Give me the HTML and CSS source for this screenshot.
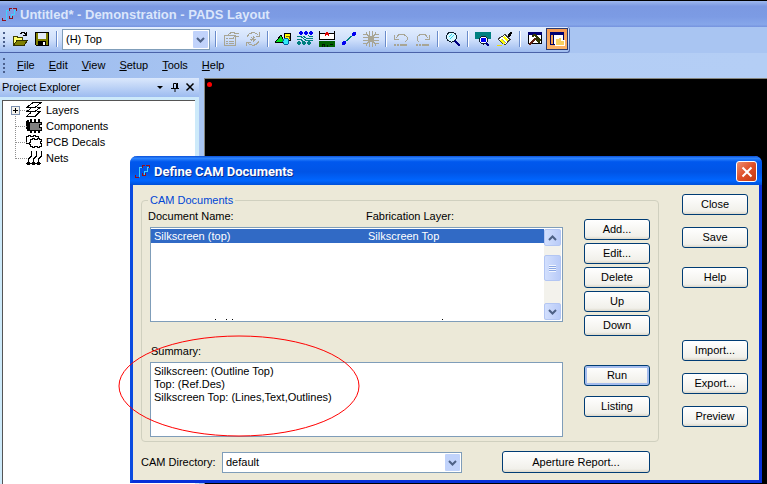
FILE: index.html
```html
<!DOCTYPE html>
<html lang="en">
<head>
  <meta charset="UTF-8">
  <meta name="viewport" content="width=device-width, initial-scale=1.0">
  <title>Untitled* - Demonstration - PADS Layout</title>
  <link rel="stylesheet" href="styles.css">
</head>
<body>
  <div class="app">
    <header class="app-title">
      <svg class="logo" viewBox="0 0 16 16"><path d="M4.500 13V3.500H7M9.500 11V7.500H12.500V3.500H14" fill="none" stroke="#40d0ff"/><path d="M.500 11V13.500H4M7.500 4V1.500H10M11 1.500H14.500V4M7.500 9V11.500H10.500V9" fill="none" stroke="#90101c"/></svg>
      <h1>Untitled* - Demonstration - PADS Layout</h1>
    </header>

    <div class="toolbar">
      <span class="grip"></span>
      <button class="tool" aria-label="Open"><svg viewBox="0 0 16 16"><path d="M1.500 14V5.500H5L6 6.500H10.500V9" fill="#ffff70" stroke="#404000"/><path d="M1.500 14.500L5 9.500H15.500L12 14.500Z" fill="#808000" stroke="#303000"/><path d="M8.500 3L10 1.500H12L14 3.500M14.500 1V4.500H11" fill="none" stroke="#000"/></svg></button>
      <button class="tool" aria-label="Save"><svg viewBox="0 0 16 16"><path d="M1.500 1.500H14.500V14.500H2.500L1.500 13.500Z" fill="#808000" stroke="#000"/><path d="M4 2H12V8H4Z" fill="#e4ecf8"/><path d="M4 10H12V14H4Z" fill="#000"/><path d="M9 11H11V14H9Z" fill="#fff"/></svg></button>
      <span class="sep"></span>
      <select class="combo layer" aria-label="Layer"><option>(H) Top</option></select>
      <span class="sep"></span>
      <button class="tool" aria-label="Properties"><svg viewBox="0 0 16 16"><path d="M1.500 4.500H12.500V14.500H1.500ZM3 7.500H5M6 7.500H11M3 10H5M6 10H11M3 12.500H5M6 12.500H11M5 4L8 1.500H11L12 2.500H16V5H12L10 7" fill="none" stroke="#a8a594"/></svg></button>
      <button class="tool" aria-label="Cycle"><svg viewBox="0 0 16 16"><path d="M2 6A6.500 6.500 0 0 1 13 4M14 10A6.500 6.500 0 0 1 3 12M14.500 1V5H10.500M1.500 15V11H5.500" fill="none" stroke="#a8a594"/><path d="M8 5V11M5 8H11M6 6L10 10M10 6L6 10" stroke="#a8a594"/></svg></button>
      <span class="sep"></span>
      <button class="tool" aria-label="Drafting"><svg viewBox="0 0 16 16"><path d="M9 2.500H15.500V9.500H9Z" fill="#ffff00" stroke="#000"/><path d="M11 5H14V8" fill="none" stroke="#806000"/><path d="M0 11.500L6 4L10 11.500Z" fill="#00e020" stroke="#000"/><circle cx="11" cy="10.500" r="3" fill="#30e8f8" stroke="#0060a0"/></svg></button>
      <button class="tool" aria-label="Design"><svg viewBox="0 0 16 16"><path d="M3 0H5V1H6V3H5V4H3V3H2V1H3ZM8 0H10V1H11V3H10V4H8V3H7V1H8ZM13 0H15V1H16V3H15V4H13V3H12V1H13Z" fill="#0000f0"/><path d="M0 5.500H4L9 9.500H16M6 5L10 7.500H16M11 4.500L13 5.500H16M0 8.500H4L6 10.500" fill="none" stroke="#008080"/><path d="M1 10H3V11H4V13H3V14H1V13H0V11H1ZM6 10H8V11H9V13H8V14H6V13H5V11H6ZM11 10H13V11H14V13H13V14H11V13H10V11H11Z" fill="#008080"/></svg></button>
      <button class="tool" aria-label="Dimensioning"><svg viewBox="0 0 16 16"><path d="M1 3H15V9H1Z" fill="#fff"/><path d="M.500 0V9M15.500 0V9M0 2.500H16M0 8.500H16" stroke="#000"/><path d="M7 1H9V2H10V5H9V4H7V5H6V2H7Z" fill="#e00000"/><path d="M0 10H16V16H0Z" fill="#006000"/><path d="M3.500 16V13.500H5.500V16M8.500 16V13.500M11 13.500H14" fill="none" stroke="#001800"/></svg></button>
      <button class="tool" aria-label="ECO"><svg viewBox="0 0 16 16"><path d="M3 12L13 3" stroke="#008080"/><circle cx="3" cy="12" r="2" fill="#0000f0"/><circle cx="13" cy="3" r="2" fill="#0000f0"/></svg></button>
      <button class="tool" aria-label="BGA"><svg viewBox="0 0 16 16"><path d="M6 5H10V6H11V10H10V11H6V10H5V6H6Z" fill="#a8a594"/><path d="M6.500 0V5M9.500 0V5M6.500 11V16M9.500 11V16M0 6.500H5M0 9.500H5M11 6.500H16M11 9.500H16M3.500 1V3L6 5.500M12.500 1V3L10 5.500M3.500 15V13L6 10.500M12.500 15V13L10 10.500M0 3.500H3M13 3.500H16M0 12.500H3M13 12.500H16" fill="none" stroke="#a8a594"/></svg></button>
      <span class="sep"></span>
      <button class="tool" aria-label="Undo"><svg viewBox="0 0 16 16"><path d="M3 7L6 3.500H11L14 6V9L12 11M1.500 4V8.500H6" fill="none" stroke="#a8a594"/><path d="M1 14H3M4 14H6M7 14H14" stroke="#a8a594" stroke-width="2"/></svg></button>
      <button class="tool" aria-label="Redo"><svg viewBox="0 0 16 16"><path d="M13 7L10 3.500H5L2 6V9L4 11M14.500 4V8.500H10" fill="none" stroke="#a8a594"/><path d="M1 14H3M4 14H6M7 14H14" stroke="#a8a594" stroke-width="2"/></svg></button>
      <span class="sep"></span>
      <button class="tool" aria-label="Zoom"><svg viewBox="0 0 16 16"><circle cx="6.500" cy="6" r="5" fill="#d8f8ff" stroke="#102030"/><path d="M4 6L7 3M5 8L9 4" stroke="#30d8f0"/><path d="M10 10L15 15" stroke="#000080" stroke-width="2"/></svg></button>
      <span class="sep"></span>
      <button class="tool" aria-label="View board"><svg viewBox="0 0 16 16"><path d="M0 1H16V8H13L12 6H6L4 8H0Z" fill="#008080"/><circle cx="8.500" cy="9" r="4" fill="#fff" stroke="#102030"/><circle cx="8.500" cy="9" r="2.500" fill="#0000f0"/><path d="M11 12L14 15" stroke="#000080" stroke-width="2"/></svg></button>
      <button class="tool" aria-label="Redraw"><svg viewBox="0 0 16 16"><path d="M11 5L14 1L15 2L12 6Z" fill="#000" stroke="#000"/><path d="M1 8L8 3.500L13 8.500L8 14Z" fill="#fff" stroke="#404040"/><path d="M5 8L9 12" stroke="#a0a0a0"/><path d="M4 9L8 13M7 6L11 10" stroke="#ffff00" stroke-width="2"/><path d="M0 14.500H5" stroke="#f0e000"/></svg></button>
      <span class="sep"></span>
      <button class="tool" aria-label="Output window"><svg viewBox="0 0 16 16"><path d="M1.500 1.500H14.500V12.500H1.500Z" fill="#fff" stroke="#000"/><path d="M1 1H15V4H1Z" fill="#000070"/><path d="M5 5L8 4L13 9L12 11L9 8L8 9" fill="none" stroke="#303800" stroke-width="2"/><path d="M8 8L2 14" stroke="#602010" stroke-width="2"/></svg></button>
      <button class="tool active" aria-label="Project explorer"><svg viewBox="0 0 16 16"><path d="M1.500 1.500H14.500V13.500H1.500Z" fill="#fff" stroke="#000060"/><path d="M1 1H15V4H1Z" fill="#000070"/><path d="M2 4H4V13H2Z" fill="#f4a04c"/><path d="M4.500 4V13" stroke="#000060"/><path d="M6.500 14.500V7.500H9L10 6.500H12L13 9.500H15.500V14.500Z" fill="#f8d060" stroke="#fff"/></svg></button>
    </div>

    <nav class="menubar">
      <span class="grip"></span>
      <button class="menu"><u>F</u>ile</button>
      <button class="menu"><u>E</u>dit</button>
      <button class="menu"><u>V</u>iew</button>
      <button class="menu"><u>S</u>etup</button>
      <button class="menu"><u>T</u>ools</button>
      <button class="menu"><u>H</u>elp</button>
    </nav>

    <main class="workspace">
      <aside class="explorer">
        <div class="panel-head">
          <h2>Project Explorer</h2>
          <button class="panel-btn" aria-label="Options"><svg viewBox="0 0 10 10"><path d="M2 4H8L5 7Z" fill="#000"/></svg></button>
          <button class="panel-btn" aria-label="Pin"><svg viewBox="0 0 10 10"><path d="M3.500 6V1.500H6.500V6M7.500 1V6M1 6.500H9M5 7V10" fill="none" stroke="#000"/></svg></button>
          <button class="panel-btn" aria-label="Close panel"><svg viewBox="0 0 10 10"><path d="M1.500 1.500L8.500 8.500M8.500 1.500L1.500 8.500" stroke="#000" stroke-width="1.500"/></svg></button>
        </div>
        <ul class="tree">
          <li>
            <button class="expander" aria-label="Expand Layers">
              <svg viewBox="0 0 9 9"><path d="M.500 .500H8.500V8.500H.500Z" fill="#f4f2ec" stroke="#7b8fae"/><path d="M2 4.500H7M4.500 2V7" stroke="#000"/></svg>
            </button>
            <svg class="node" viewBox="0 0 16 16"><path d="M.500 14.500H9L14 9.500H11M.500 14.500L5 10.500M.500 9.500H9L14 5.500H11M.500 9.500L5 6.500M.500 5.500H9L15 .500H7Z" fill="#fff" stroke="#000"/></svg>
            Layers
          </li>
          <li>
            <svg class="node" viewBox="0 0 16 16"><path d="M0 3H3V11H0ZM1 2H3V13H1ZM4 1H6V15H4ZM8 1H10V15H8ZM12 1H14V15H12Z" fill="#000"/><path d="M3.500 4.500H15.500V6.500H13.500V9.500H15.500V12.500H3.500Z" fill="#808080" stroke="#000"/></svg>
            Components
          </li>
          <li>
            <svg class="node" viewBox="0 0 16 16"><path d="M.500 2.500H2.500V1.500H4.500V2.500H7.500V1.500H9.500V2.500H12.500V9.500H.500Z" fill="#fff" stroke="#000"/><path d="M4.500 5.500H6.500V4.500H8.500V5.500H11.500V4.500H13.500V5.500H15.500V7.500H14.500V9.500H15.500V12.500H13.500V13.500H11.500V12.500H8.500V13.500H6.500V12.500H4.500V10.500H3.500V8.500H4.500Z" fill="#fff" stroke="#000"/></svg>
            PCB Decals
          </li>
          <li>
            <svg class="node" viewBox="0 0 16 16"><path d="M2.500 13V9L5.500 6V1M7.500 13V9L10.500 6V1M12.500 13V9L15.500 6V1" fill="none" stroke="#000"/><path d="M1 12H4V15H1ZM6 12H9V15H6ZM11 12H14V15H11ZM0 13H15V14H0Z"/></svg>
            Nets
          </li>
        </ul>
      </aside>
      <div class="canvas"><span class="origin"></span></div>
    </main>

    <section class="dialog" role="dialog" aria-labelledby="dialog-name">
      <div class="dialog-title">
        <svg class="logo" viewBox="0 0 16 16"><path d="M4.500 13V3.500H7M9.500 11V7.500H12.500V3.500H14" fill="none" stroke="#40d0ff"/><path d="M.500 11V13.500H4M7.500 4V1.500H10M11 1.500H14.500V4M7.500 9V11.500H10.500V9" fill="none" stroke="#90101c"/></svg>
        <h2 id="dialog-name">Define CAM Documents</h2>
        <button class="close-x" aria-label="Close window"><svg viewBox="0 0 12 12"><path d="M1.500 1.500L10.500 10.500M10.500 1.500L1.500 10.500" stroke="#fff" stroke-width="2"/></svg></button>
      </div>
      <div class="dialog-body">
        <div class="left">
          <fieldset class="group">
            <legend>CAM Documents</legend>
            <div class="group-row">
              <div class="lists">
                <div class="cols head"><span>Document Name:</span><span>Fabrication Layer:</span></div>
                <div class="listbox">
                  <div class="rows" role="listbox" aria-label="CAM documents">
                    <div class="cols row selected" role="option" aria-selected="true"><span>Silkscreen (top)</span><span>Silkscreen Top</span></div>
                    <svg class="clipped-row" viewBox="0 0 392 1" preserveAspectRatio="xMinYMin"><path d="M64 .500H65M75 .500H76M81 .500H82M291 .500H292" stroke="#000"/></svg>
                  </div>
                  <div class="scrollbar">
                    <button class="scroll-btn" aria-label="Scroll up"><svg viewBox="0 0 9 6"><path d="M1 5L4.500 1.500L8 5" fill="none" stroke="#4d6185" stroke-width="2"/></svg></button>
                    <span class="thumb"></span>
                    <button class="scroll-btn" aria-label="Scroll down"><svg viewBox="0 0 9 6"><path d="M1 1L4.500 4.500L8 1" fill="none" stroke="#4d6185" stroke-width="2"/></svg></button>
                  </div>
                </div>
                <label class="summary-label" for="summary">Summary:</label>
                <textarea class="summary" id="summary" readonly>Silkscreen: (Outline Top)
Top: (Ref.Des)
Silkscreen Top: (Lines,Text,Outlines)</textarea>
              </div>
              <div class="actions">
                <button class="btn">Add...</button>
                <button class="btn">Edit...</button>
                <button class="btn">Delete</button>
                <button class="btn">Up</button>
                <button class="btn">Down</button>
                <div class="run-actions">
                  <button class="btn default">Run</button>
                  <button class="btn">Listing</button>
                </div>
              </div>
            </div>
          </fieldset>
          <div class="directory">
            <label for="directory">CAM Directory:</label>
            <select class="combo folder" id="directory"><option>default</option></select>
            <button class="btn aperture">Aperture Report...</button>
          </div>
        </div>
        <div class="side">
          <button class="btn">Close</button>
          <button class="btn">Save</button>
          <button class="btn help">Help</button>
          <button class="btn import">Import...</button>
          <button class="btn">Export...</button>
          <button class="btn">Preview</button>
        </div>
      </div>
    </section>

    <svg class="marker" viewBox="0 0 242 102"><ellipse cx="121" cy="51" rx="120" ry="50" fill="none" stroke="#f00"/></svg>
  </div>
</body>
</html>
```
FILE: styles.css
```css
* {
  box-sizing: border-box;
}
body {
  margin: 0;
  font-family: "Liberation Sans", Arial, sans-serif;
  font-size: 11px;
  line-height: 13px;
  color: #000;
}
button, select, textarea {
  font: inherit;
  color: inherit;
}
button {
  padding: 0;
  border: 0;
  background: none;
}
h1, h2 {
  margin: 0;
  font-size: 13px;
  line-height: 16px;
}
svg {
  display: block;
}
.app {
  position: relative;
  display: flex;
  flex-direction: column;
  height: 100vh;
  overflow: hidden;
  background: #a9c5f2;
}
.app-title {
  display: flex;
  align-items: center;
  gap: 2px;
  height: 27px;
  padding: 2px 2px 0;
  border-top: 1px solid #000;
  background: linear-gradient(#9db8ee, #7b99e2 20%, #7c9be4 60%, #86a6ea 90%, #7593de);
  color: #dbe6fb;
}
.logo {
  width: 16px;
  height: 16px;
}
.logo, .tool svg, .node, .expander svg {
  shape-rendering: crispEdges;
}

/* toolbar and menu */
.toolbar {
  display: flex;
  align-items: center;
  align-self: flex-start;
  height: 26px;
  padding: 0 1px 1px 2px;
  border-bottom: 1px solid #4a62a8;
  border-right: 1px solid #4a62a8;
  border-radius: 0 3px 3px 0;
  background: linear-gradient(#e3eefe, #d0e0fb 50%, #9dbbef);
}
.grip {
  width: 7px;
  height: 15px;
  margin-left: 1px;
  margin-right: -1px;
  border-left: 2px dotted #4a5f8c;
}
.tool {
  display: flex;
  align-items: center;
  justify-content: center;
  width: 22px;
  height: 22px;
}
.tool svg {
  width: 16px;
  height: 16px;
}
.tool.active {
  border: 1px solid #2a3a70;
  background: linear-gradient(#f79a50, #fbb368);
}
.sep {
  width: 2px;
  height: 16px;
  margin: 0 3px;
  border-left: 1px solid #6a8ccb;
  border-right: 1px solid #fff;
}
.combo {
  height: 21px;
  padding: 0 20px 0 3px;
  border: 1px solid #7f9db9;
  border-radius: 0;
  appearance: none;
  background: #fff url("data:image/svg+xml,%3Csvg xmlns='http://www.w3.org/2000/svg' width='17' height='17'%3E%3Crect x='1' y='0' width='15' height='17' rx='1' fill='%23c1d3fb'/%3E%3Cpath d='M5 7L8.500 10.500L12 7' fill='none' stroke='%234d6185' stroke-width='2'/%3E%3C/svg%3E") no-repeat right 0 center;
}
.layer {
  width: 148px;
  margin: 0 2px 0 1px;
}
.menubar {
  display: flex;
  align-items: center;
  gap: 14px;
  height: 25px;
  padding: 0 2px;
  background: linear-gradient(90deg, #9dbcee, #b3cdf5 60%, #b4cef5);
}
.menubar .grip {
  margin-right: -7px;
}
.menu u {
  text-underline-offset: 1px;
}

/* project explorer */
.workspace {
  display: flex;
  flex: 1;
  min-height: 0;
}
.explorer {
  display: flex;
  flex-direction: column;
  width: 199px;
  margin-right: 5px;
  background: #cdeafa;
}
.panel-head {
  display: flex;
  align-items: center;
  gap: 5px;
  height: 19px;
  padding: 0 4px 2px 2px;
  background: linear-gradient(#dbe8fc, #9dbcf0);
}
.panel-head h2 {
  flex: 1;
  font-size: 11px;
  font-weight: normal;
}
.panel-btn svg {
  width: 10px;
  height: 10px;
}
.tree {
  flex: 1;
  margin: 3px 4px 0 2px;
  padding: 1px 0 0 23px;
  border: 1px solid #555;
  border-width: 1px 0 0 1px;
  background: #fff;
  list-style: none;
}
.tree li {
  position: relative;
  display: flex;
  align-items: center;
  gap: 4px;
  height: 16px;
}
.tree li::before {
  content: "";
  position: absolute;
  left: -11px;
  top: -8px;
  width: 11px;
  height: 16px;
  border-left: 1px dotted #909090;
  border-bottom: 1px dotted #909090;
}
.tree li:first-child::before {
  top: 7px;
  height: 1px;
}
.expander {
  position: absolute;
  left: -15px;
  top: 4px;
  z-index: 1;
}
.expander svg {
  width: 9px;
  height: 9px;
}
.node {
  width: 16px;
  height: 16px;
}
.canvas {
  flex: 1;
  padding: 3px 2px;
  border: 1px solid #85857c;
  border-width: 1px 0 0 1px;
  background: #000;
}
.origin {
  display: block;
  width: 5px;
  height: 5px;
  border-radius: 50%;
  background: #f00;
}

/* dialog window */
.dialog {
  position: absolute;
  left: 130px;
  right: 5px;
  top: 156px;
  border: 3px solid #0831d9;
  border-top: 0;
  border-left-color: #0a4be0;
  border-radius: 7px 7px 0 0;
  background: #ece9d8;
}
.dialog-title {
  display: flex;
  align-items: center;
  gap: 3px;
  height: 29px;
  margin: 0 -3px;
  padding: 2px 5px 0;
  border-radius: 7px 7px 0 0;
  background: linear-gradient(#0a4fd8, #2f86ff 8%, #0058ee 20%, #0054e6 55%, #0066ff 85%, #0050d8);
  color: #fff;
}
.dialog-title h2 {
  flex: 1;
  font-family: Roboto, "Liberation Sans", sans-serif;
  text-shadow: 1px 1px #0a2c8c;
}
.close-x {
  display: flex;
  align-items: center;
  justify-content: center;
  width: 21px;
  height: 21px;
  border: 1px solid #fff;
  border-radius: 3px;
  background: linear-gradient(135deg, #ec8f73, #df4f28 50%, #c43a12);
}
.close-x svg {
  width: 12px;
  height: 12px;
}
.dialog-body {
  display: flex;
  gap: 23px;
  padding: 8px 11px 7px 8px;
}
.left {
  flex: 1;
  min-width: 0;
}
.group {
  min-width: 0;
  margin: 0;
  padding: 0 8px 4px;
  border: 1px solid #d0d0bf;
  border-radius: 4px;
}
.group legend {
  height: 14px;
  margin-left: -2px;
  padding: 1px 2px 0;
  color: #0046d5;
}
.group-row {
  display: flex;
  gap: 21px;
}
.lists {
  display: flex;
  flex: 1;
  flex-direction: column;
  min-width: 0;
}
.cols {
  display: grid;
  grid-template-columns: 214px 1fr;
}
.head {
  grid-template-columns: 218px 1fr;
  height: 20px;
  margin-left: -2px;
  padding: 3px 0 0;
}
.listbox {
  display: flex;
  height: 95px;
  padding: 1px 1px 1px 0;
  border: 1px solid #7f9db9;
  background: #fff;
}
.rows {
  display: flex;
  flex: 1;
  flex-direction: column;
  justify-content: space-between;
}
.row {
  padding: 1px 0 0 3px;
}
.selected {
  background: #316ac5;
  color: #fff;
}
.clipped-row {
  height: 1px;
}
.scrollbar {
  display: flex;
  flex-direction: column;
  width: 17px;
  background: #f3f2ec;
}
.scroll-btn, .thumb {
  display: flex;
  align-items: center;
  justify-content: center;
  height: 17px;
  border: 1px solid #b3c6f3;
  border-radius: 2px;
  background: linear-gradient(90deg, #d2dffd, #b9cbf8);
}
.scroll-btn svg {
  width: 9px;
  height: 6px;
}
.thumb {
  height: 26px;
  margin: 9px 0 auto;
}
.thumb::before {
  content: "";
  width: 7px;
  height: 7px;
  background: repeating-linear-gradient(#f2f6fe 0 1px, #8ca8e4 1px 2px);
}
.summary-label {
  height: 17px;
  margin-top: 23px;
  padding-left: 1px;
}
.summary {
  height: 75px;
  padding: 2px 3px;
  border: 1px solid #7f9db9;
  border-radius: 0;
  outline: 0;
  background: #fff;
  resize: none;
}
.actions, .side {
  display: flex;
  flex-direction: column;
  width: 66px;
}
.actions {
  gap: 3px;
  padding-top: 12px;
}
.run-actions {
  display: flex;
  flex-direction: column;
  gap: 10px;
  margin-top: 26px;
}
.btn {
  height: 22px;
  border: 1px solid #003c74;
  border-radius: 3px;
  background: linear-gradient(#fff, #f1f0ea 85%, #dcd8cb);
}
.actions .btn, .side .btn {
  height: 21px;
}
.btn.default {
  box-shadow: inset 0 0 0 2px #a5bdee, inset 0 -2px #6982d8;
}
.directory {
  display: flex;
  align-items: center;
  margin-top: 9px;
  padding-right: 9px;
}
.directory label {
  width: 81px;
}
.folder {
  width: 240px;
}
.aperture {
  width: 148px;
  margin-left: auto;
}
.side {
  gap: 12px;
  padding-top: 1px;
}
.side .help {
  margin-top: 7px;
}
.side .import {
  margin-top: 40px;
}

/* hand-drawn ring round the summary */
.marker {
  position: absolute;
  left: 118px;
  top: 335px;
  width: 242px;
  height: 102px;
  pointer-events: none;
}
```
